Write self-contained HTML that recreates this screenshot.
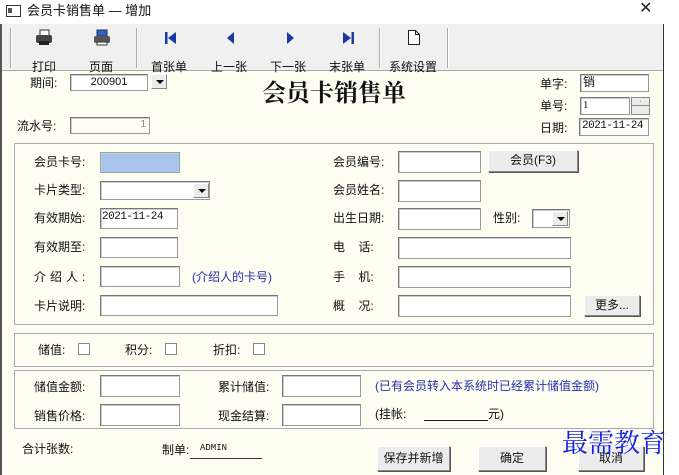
<!DOCTYPE html>
<html><head><meta charset="utf-8"><style>
*{margin:0;padding:0;box-sizing:border-box}
body{width:679px;height:475px;background:#fff;position:relative;overflow:hidden;font-family:"Liberation Sans","Noto Sans CJK SC",sans-serif;font-size:12px;color:#111}
.a{position:absolute}
.t{position:absolute;white-space:nowrap;line-height:14px}
.in{position:absolute;background:#fff;border:1px solid #999;border-top-color:#777;border-left-color:#777;box-shadow:inset 1px 1px 0 #ccc}
.btn{position:absolute;background:#ececec;border:1px solid #888;border-top-color:#fff;border-left-color:#fff;box-shadow:1px 1px 0 #555;text-align:center;font-size:12px}
.grp{position:absolute;border:1px solid #aaa;box-shadow:inset 1px 1px 0 #fff,1px 1px 0 #fff}
.dd{position:absolute;width:16px;height:15px;background:#ececec;border:1px solid #888;border-top-color:#fff;border-left-color:#fff}
.dd:after{content:"";position:absolute;left:4px;top:5px;border-left:4px solid transparent;border-right:4px solid transparent;border-top:4px solid #000}
.cb{position:absolute;width:12px;height:12px;border:1px solid #888;background:#fff}
.tb{position:absolute;top:58px;font-size:12px;white-space:nowrap}
.blue{color:#2430b0}
</style></head><body>
<!-- title bar -->
<div class="a" style="left:6px;top:5px;width:15px;height:12px;border:1px solid #333;background:#fff"></div>
<div class="a" style="left:8px;top:8px;width:4px;height:5px;background:#555"></div>
<div class="t" style="left:27px;top:4px;font-size:13px">会员卡销售单 — 增加</div>
<div class="t" style="left:639px;top:2px;font-size:16px;color:#222">✕</div>
<!-- window frame -->
<div class="a" style="left:0;top:24px;width:664px;height:451px;background:#fdfdf1;border-left:2px solid #555;border-right:1px solid #333"></div>
<!-- toolbar -->
<div class="a" style="left:2px;top:24px;width:661px;height:47px;background:#f0f0f0;border-bottom:1px solid #aaa"></div>
<div class="a" style="left:10px;top:28px;width:2px;height:40px;border-left:1px solid #aaa;border-right:1px solid #fff"></div>
<div class="a" style="left:136px;top:28px;width:2px;height:40px;border-left:1px solid #aaa;border-right:1px solid #fff"></div>
<div class="a" style="left:379px;top:28px;width:2px;height:40px;border-left:1px solid #aaa;border-right:1px solid #fff"></div>
<div class="a" style="left:447px;top:28px;width:2px;height:40px;border-left:1px solid #aaa;border-right:1px solid #fff"></div>
<!-- icons -->
<svg class="a" style="left:34px;top:29px" width="20" height="18"><rect x="6" y="1" width="9" height="6" fill="#fff" stroke="#333"/><rect x="2" y="6" width="16" height="8" rx="2" fill="#444"/><rect x="5" y="12" width="10" height="4" fill="#222"/></svg>
<svg class="a" style="left:92px;top:29px" width="20" height="18"><rect x="5" y="1" width="10" height="6" fill="#3060d0" stroke="#234"/><rect x="2" y="7" width="16" height="7" rx="2" fill="#555"/><rect x="5" y="13" width="10" height="3" fill="#fff" stroke="#333"/></svg>
<svg class="a" style="left:164px;top:31px" width="14" height="14"><rect x="1" y="1" width="2.5" height="12" fill="#1a3aa0"/><path d="M12 1V13L4 7Z" fill="#1a3aa0"/></svg>
<svg class="a" style="left:225px;top:31px" width="12" height="14"><path d="M9 1V13L2 7Z" fill="#1a3aa0"/></svg>
<svg class="a" style="left:284px;top:31px" width="12" height="14"><path d="M3 1V13L10 7Z" fill="#1a3aa0"/></svg>
<svg class="a" style="left:341px;top:31px" width="14" height="14"><path d="M2 1V13L10 7Z" fill="#1a3aa0"/><rect x="10.5" y="1" width="2.5" height="12" fill="#1a3aa0"/></svg>
<svg class="a" style="left:407px;top:29px" width="14" height="17"><path d="M1.5 1.5H8.5L12.5 5.5V15.5H1.5Z M8.5 1.5V5.5H12.5" fill="#fff" stroke="#222"/></svg>
<div class="tb" style="left:32px">打印</div>
<div class="tb" style="left:89px">页面</div>
<div class="tb" style="left:151px">首张单</div>
<div class="tb" style="left:211px">上一张</div>
<div class="tb" style="left:270px">下一张</div>
<div class="tb" style="left:329px">末张单</div>
<div class="tb" style="left:389px">系统设置</div>
<!-- header -->
<div class="t" style="left:30px;top:76px">期间:</div>
<div class="in" style="left:70px;top:74px;width:78px;height:17px;font-size:11px;text-align:center;line-height:14px">200901</div>
<div class="dd" style="left:151px;top:74px"></div>
<div class="t" style="left:262px;top:80px;font-size:24px;line-height:28px;font-family:'Liberation Serif','Noto Serif CJK SC',serif;font-weight:bold">会员卡销售单</div>
<div class="t" style="left:17px;top:119px">流水号:</div>
<div class="in" style="left:70px;top:117px;width:80px;height:17px;background:#fdfdf1;font-size:10px;text-align:right;padding-right:3px;color:#888;line-height:14px">1</div>
<div class="t" style="left:540px;top:77px">单字:</div>
<div class="in" style="left:580px;top:74px;width:69px;height:18px;padding-left:2px;line-height:15px">销</div>
<div class="t" style="left:540px;top:99px">单号:</div>
<div class="in" style="left:580px;top:97px;width:50px;height:18px;padding-left:2px;font-size:11px;line-height:15px;font-family:'Liberation Serif',serif">1</div>
<div class="a" style="left:631px;top:97px;width:19px;height:18px;background:#ececec;border:1px solid #888"><div style="border-bottom:1px solid #888;height:8px;text-align:center;font-size:7px;line-height:7px">·</div></div>
<div class="t" style="left:540px;top:121px">日期:</div>
<div class="in" style="left:579px;top:118px;width:70px;height:18px;font-size:11px;line-height:15px;font-family:'Liberation Mono',monospace;padding-left:2px;letter-spacing:-0.5px">2021-11-24</div>
<!-- group 1 -->
<div class="grp" style="left:14px;top:143px;width:640px;height:182px"></div>
<div class="t" style="left:34px;top:155px">会员卡号:</div>
<div class="in" style="left:100px;top:152px;width:80px;height:21px;background:#a8c4ea;border-color:#8aa"></div>
<div class="t" style="left:34px;top:183px">卡片类型:</div>
<div class="in" style="left:100px;top:181px;width:110px;height:19px"></div>
<div class="dd" style="left:193px;top:183px"></div>
<div class="t" style="left:34px;top:211px">有效期始:</div>
<div class="in" style="left:100px;top:208px;width:78px;height:21px;font-size:11px;font-family:'Liberation Mono',monospace;letter-spacing:-0.5px;line-height:17px;padding-left:1px">2021-11-24</div>
<div class="t" style="left:34px;top:240px">有效期至:</div>
<div class="in" style="left:100px;top:237px;width:78px;height:21px"></div>
<div class="t" style="left:34px;top:270px;letter-spacing:4px">介绍人:</div>
<div class="in" style="left:100px;top:266px;width:80px;height:21px"></div>
<div class="t blue" style="left:192px;top:270px">(介绍人的卡号)</div>
<div class="t" style="left:34px;top:299px">卡片说明:</div>
<div class="in" style="left:100px;top:295px;width:178px;height:21px"></div>
<div class="t" style="left:333px;top:155px">会员编号:</div>
<div class="in" style="left:398px;top:151px;width:83px;height:22px"></div>
<div class="btn" style="left:488px;top:150px;width:90px;height:22px;line-height:19px">会员(F3)</div>
<div class="t" style="left:333px;top:183px">会员姓名:</div>
<div class="in" style="left:398px;top:180px;width:83px;height:22px"></div>
<div class="t" style="left:333px;top:211px">出生日期:</div>
<div class="in" style="left:398px;top:208px;width:83px;height:22px"></div>
<div class="t" style="left:493px;top:211px">性别:</div>
<div class="in" style="left:532px;top:209px;width:38px;height:19px"></div>
<div class="dd" style="left:552px;top:211px"></div>
<div class="t" style="left:333px;top:240px">电&nbsp;&nbsp;&nbsp;&nbsp;话:</div>
<div class="in" style="left:398px;top:237px;width:173px;height:22px"></div>
<div class="t" style="left:333px;top:270px">手&nbsp;&nbsp;&nbsp;&nbsp;机:</div>
<div class="in" style="left:398px;top:266px;width:173px;height:22px"></div>
<div class="t" style="left:333px;top:299px">概&nbsp;&nbsp;&nbsp;&nbsp;况:</div>
<div class="in" style="left:398px;top:295px;width:173px;height:22px"></div>
<div class="btn" style="left:584px;top:295px;width:56px;height:21px;line-height:18px">更多...</div>
<!-- group 2 -->
<div class="grp" style="left:14px;top:333px;width:640px;height:34px"></div>
<div class="t" style="left:38px;top:343px">储值:</div><div class="cb" style="left:78px;top:343px"></div>
<div class="t" style="left:125px;top:343px">积分:</div><div class="cb" style="left:165px;top:343px"></div>
<div class="t" style="left:213px;top:343px">折扣:</div><div class="cb" style="left:253px;top:343px"></div>
<!-- group 3 -->
<div class="grp" style="left:14px;top:370px;width:640px;height:59px"></div>
<div class="t" style="left:34px;top:380px">储值金额:</div>
<div class="in" style="left:100px;top:375px;width:80px;height:22px"></div>
<div class="t" style="left:218px;top:380px">累计储值:</div>
<div class="in" style="left:282px;top:375px;width:79px;height:22px"></div>
<div class="t blue" style="left:375px;top:379px">(已有会员转入本系统时已经累计储值金额)</div>
<div class="t" style="left:34px;top:409px">销售价格:</div>
<div class="in" style="left:100px;top:404px;width:80px;height:22px"></div>
<div class="t" style="left:218px;top:409px">现金结算:</div>
<div class="in" style="left:282px;top:404px;width:79px;height:22px"></div>
<div class="t" style="left:375px;top:407px">(挂帐:</div>
<div class="a" style="left:424px;top:420px;width:64px;height:1px;background:#222"></div>
<div class="t" style="left:488px;top:407px">元)</div>
<!-- bottom -->
<div class="t" style="left:22px;top:442px">合计张数:</div>
<div class="t" style="left:162px;top:443px">制单:</div>
<div class="t" style="left:200px;top:441px;font-size:9px;font-family:'Liberation Mono',monospace">ADMIN</div>
<div class="a" style="left:190px;top:458px;width:72px;height:1px;background:#333"></div>
<div class="btn" style="left:377px;top:446px;width:73px;height:25px;line-height:22px">保存并新增</div>
<div class="btn" style="left:478px;top:446px;width:68px;height:25px;line-height:22px">确定</div>
<div class="btn" style="left:578px;top:446px;width:66px;height:25px;line-height:22px">取消</div>
<div class="t" style="left:562px;top:426px;font-size:26px;line-height:32px;color:#1020e0;font-family:'Noto Serif CJK SC',serif">最需教育</div>
</body></html>
